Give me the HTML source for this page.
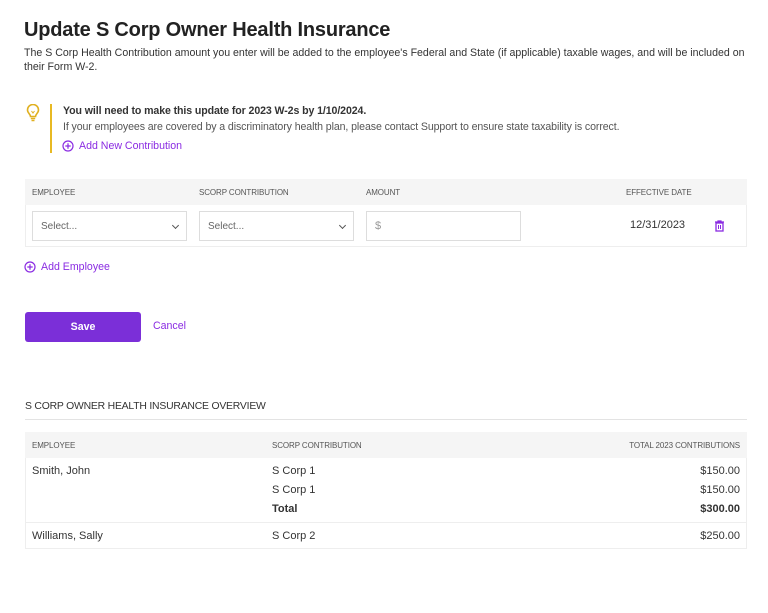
<!DOCTYPE html>
<html><head><meta charset="utf-8"><style>
*{margin:0;padding:0;box-sizing:border-box}
body{width:768px;height:613px;background:#fff;font-family:"Liberation Sans",sans-serif;color:#333;position:relative;overflow:hidden}
.a{position:absolute;white-space:nowrap}
.h{font-size:8px;color:#555;letter-spacing:-0.1px}
.p{color:#8a2be2}
.sel{position:absolute;height:30px;border:1px solid #ddd;background:#fff;font-size:10px;color:#666;padding:9px 8px}
.dd:after{content:"";position:absolute;right:8px;top:11px;width:4px;height:4px;border-right:1px solid #555;border-bottom:1px solid #555;transform:rotate(45deg)}
.t{font-size:11px;color:#333}
</style></head><body>
<div class="a" style="left:24px;top:19px;font-size:20px;font-weight:bold;color:#222;letter-spacing:-0.2px">Update S Corp Owner Health Insurance</div>
<div class="a" style="left:24px;top:46px;font-size:10.6px;line-height:14px;color:#333;letter-spacing:0px">The S Corp Health Contribution amount you enter will be added to the employee's Federal and State (if applicable) taxable wages, and will be included on<br>their Form W-2.</div>
<svg class="a" style="left:26px;top:104px" width="14" height="18" viewBox="0 0 14 18"><path d="M4.5 12.5 C4.5 10 1.5 9 1.5 6 A5.5 5.5 0 0 1 12.5 6 C12.5 9 9.5 10 9.5 12.5 Z" fill="none" stroke="#e0b020" stroke-width="1.6"/><path d="M4.8 14.5h4.4M5.5 16.5h3" stroke="#e0b020" stroke-width="1.5"/><path d="M5.5 7l1.5 2 1.5-2" stroke="#e0b020" fill="none" stroke-width="1"/></svg>
<div class="a" style="left:50px;top:104px;width:2px;height:49px;background:#e8b923"></div>
<div class="a" style="left:63px;top:105px;font-size:10.6px;font-weight:bold;color:#333;letter-spacing:-0.1px">You will need to make this update for 2023 W-2s by 1/10/2024.</div>
<div class="a" style="left:63px;top:121px;font-size:10.6px;color:#555;letter-spacing:-0.1px">If your employees are covered by a discriminatory health plan, please contact Support to ensure state taxability is correct.</div>
<svg class="a" style="left:62px;top:140px" width="12" height="12"><circle cx="6" cy="6" r="5" fill="none" stroke="#8a2be2" stroke-width="1.2"/><path d="M6 3.3v5.4M3.3 6h5.4" stroke="#8a2be2" stroke-width="1.2"/></svg>
<div class="a p" style="left:79px;top:140px;font-size:10.6px">Add New Contribution</div>

<div class="a" style="left:25px;top:179px;width:722px;height:68px;border:1px solid #eee;border-top:none"></div>
<div class="a" style="left:25px;top:179px;width:722px;height:26px;background:#f5f5f5"></div>
<div class="a h" style="left:32px;top:188px">EMPLOYEE</div>
<div class="a h" style="left:199px;top:188px">SCORP CONTRIBUTION</div>
<div class="a h" style="left:366px;top:188px">AMOUNT</div>
<div class="a h" style="left:626px;top:188px">EFFECTIVE DATE</div>
<div class="sel dd" style="left:32px;top:211px;width:155px">Select...</div>
<div class="sel dd" style="left:199px;top:211px;width:155px">Select...</div>
<div class="sel" style="left:366px;top:211px;width:155px;color:#999;font-size:11px;padding-top:8px">$</div>
<div class="a" style="left:630px;top:219px;font-size:11px;color:#333">12/31/2023</div>
<svg class="a" style="left:714px;top:220px" width="11" height="12"><path d="M1 2h9M4 2V1h3v1" stroke="#8a2be2" stroke-width="1.2" fill="none"/><rect x="2" y="3" width="7" height="8" fill="none" stroke="#8a2be2" stroke-width="1.3"/><path d="M4.5 5v4M6.5 5v4" stroke="#8a2be2"/></svg>

<svg class="a" style="left:24px;top:261px" width="12" height="12"><circle cx="6" cy="6" r="5" fill="none" stroke="#8a2be2" stroke-width="1.2"/><path d="M6 3.3v5.4M3.3 6h5.4" stroke="#8a2be2" stroke-width="1.2"/></svg>
<div class="a p" style="left:41px;top:261px;font-size:10.6px">Add Employee</div>

<div class="a" style="left:25px;top:312px;width:116px;height:30px;background:#7b2fd8;border-radius:3px;color:#fff;font-size:10.6px;font-weight:bold;text-align:center;line-height:30px">Save</div>
<div class="a p" style="left:153px;top:320px;font-size:10.6px">Cancel</div>

<div class="a" style="left:25px;top:401px;font-size:10.4px;color:#333;letter-spacing:-0.2px">S CORP OWNER HEALTH INSURANCE OVERVIEW</div>
<div class="a" style="left:25px;top:419px;width:722px;height:1px;background:#e3e3e3"></div>

<div class="a" style="left:25px;top:432px;width:722px;height:117px;border:1px solid #eee;border-top:none"></div>
<div class="a" style="left:25px;top:432px;width:722px;height:26px;background:#f5f5f5"></div>
<div class="a h" style="left:32px;top:441px">EMPLOYEE</div>
<div class="a h" style="left:272px;top:441px">SCORP CONTRIBUTION</div>
<div class="a h" style="right:28px;top:441px">TOTAL 2023 CONTRIBUTIONS</div>
<div class="a t" style="left:32px;top:465px">Smith, John</div>
<div class="a t" style="left:272px;top:465px">S Corp 1</div>
<div class="a t" style="right:28px;top:465px">$150.00</div>
<div class="a t" style="left:272px;top:484px">S Corp 1</div>
<div class="a t" style="right:28px;top:484px">$150.00</div>
<div class="a t" style="left:272px;top:503px;font-weight:bold">Total</div>
<div class="a t" style="right:28px;top:503px;font-weight:bold">$300.00</div>
<div class="a" style="left:25px;top:522px;width:722px;height:1px;background:#eee"></div>
<div class="a t" style="left:32px;top:530px">Williams, Sally</div>
<div class="a t" style="left:272px;top:530px">S Corp 2</div>
<div class="a t" style="right:28px;top:530px">$250.00</div>
</body></html>
